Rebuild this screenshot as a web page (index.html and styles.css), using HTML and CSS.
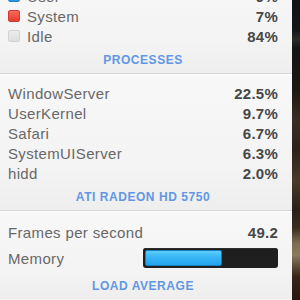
FILE: index.html
```html
<!DOCTYPE html>
<html>
<head>
<meta charset="utf-8">
<link rel="stylesheet" href="styles.css">
</head>
<body>
<div class="screen">
  <div class="panel">
    <section class="section section-cpu">
      <div class="row"><span class="label"><span class="swatch swatch-user"></span>User</span><span class="value">9%</span></div>
      <div class="row"><span class="label"><span class="swatch swatch-system"></span>System</span><span class="value">7%</span></div>
      <div class="row"><span class="label"><span class="swatch swatch-idle"></span>Idle</span><span class="value">84%</span></div>
      <div class="header">PROCESSES</div>
    </section>
    <section class="section section-proc">
      <div class="row"><span class="label">WindowServer</span><span class="value">22.5%</span></div>
      <div class="row"><span class="label">UserKernel</span><span class="value">9.7%</span></div>
      <div class="row"><span class="label">Safari</span><span class="value">6.7%</span></div>
      <div class="row"><span class="label">SystemUIServer</span><span class="value">6.3%</span></div>
      <div class="row"><span class="label">hidd</span><span class="value">2.0%</span></div>
      <div class="header">ATI RADEON HD 5750</div>
    </section>
    <section class="section section-gpu">
      <div class="row"><span class="label">Frames per second</span><span class="value">49.2</span></div>
      <div class="row row-bar"><span class="label">Memory</span><span class="bar"><span class="bar-fill" style="width:59%"></span></span></div>
      <div class="header header-last">LOAD AVERAGE</div>
    </section>
  </div>
  <div class="backdrop"></div>
</div>
</body>
</html>
```
FILE: styles.css
```css
html, body {
  margin: 0;
  padding: 0;
  width: 300px;
  height: 300px;
  overflow: hidden;
  background: #1a1512;
}

.screen {
  display: flex;
  width: 300px;
  height: 300px;
  overflow: hidden;
}

.panel {
  width: 292px;
  flex: none;
  margin-top: -24px;
  font-family: "Liberation Sans", Arial, sans-serif;
  background: #f5f5f5;
}

.backdrop {
  flex: 1;
  background: linear-gradient(180deg,
    #121314 0%, #141618 10%, #2a2a26 13%, #141414 16%,
    #1c1812 30%, #3a2e22 40%, #2c2219 50%, #4a3a28 60%,
    #2a2018 70%, #3a2c20 76%, #7c6c50 81%, #8a7a5e 85%,
    #3a2418 92%, #2a1510 100%);
}

.section {
  padding: 10px 14px 6px 8px;
  border-bottom: 1px solid #d6d6d6;
  background: linear-gradient(180deg, #f8f8f8 0%, #f3f3f3 70%, #eeeeee 100%);
  box-shadow: inset 0 1px 0 #fcfcfc;
}

.section-gpu {
  padding-top: 11px;
  border-bottom: none;
}

.row {
  display: flex;
  align-items: center;
  justify-content: space-between;
  height: 20px;
}

.row-bar {
  height: 32px;
}

.label {
  display: flex;
  align-items: center;
  font-size: 15px;
  letter-spacing: 0.35px;
  color: #686868;
}

.value {
  font-size: 15px;
  font-weight: bold;
  letter-spacing: 0.25px;
  color: #474747;
}

.swatch {
  width: 12px;
  height: 12px;
  border-radius: 2px;
  margin-right: 7px;
  box-sizing: border-box;
}

.swatch-user {
  background: linear-gradient(180deg, #5ab8f8, #2a90e8);
  border: 1px solid #2a80d0;
}

.swatch-system {
  background: linear-gradient(180deg, #f86a5c, #e83c30);
  border: 1px solid #d23a2e;
}

.swatch-idle {
  background: linear-gradient(180deg, #ececec, #dedede);
  border: 1px solid #d2d2d2;
}

.header {
  margin-top: 6.5px;
  height: 14px;
  line-height: 14px;
  text-align: center;
  font-size: 12px;
  font-weight: bold;
  letter-spacing: 0.55px;
  color: #6197e6;
}

.header-last {
  margin-top: 4.5px;
}

.bar {
  width: 135px;
  height: 20px;
  box-sizing: border-box;
  padding: 2px;
  border-radius: 3px;
  background: #1f1f1f;
  box-shadow: inset 0 1px 0 #2c2c2c;
  display: flex;
}

.bar-fill {
  height: 100%;
  border-radius: 2px;
  box-sizing: border-box;
  border: 1px solid #157fc0;
  background: linear-gradient(180deg, #5ccdfb 0%, #37b6f6 45%, #23a4ec 100%);
}
```
